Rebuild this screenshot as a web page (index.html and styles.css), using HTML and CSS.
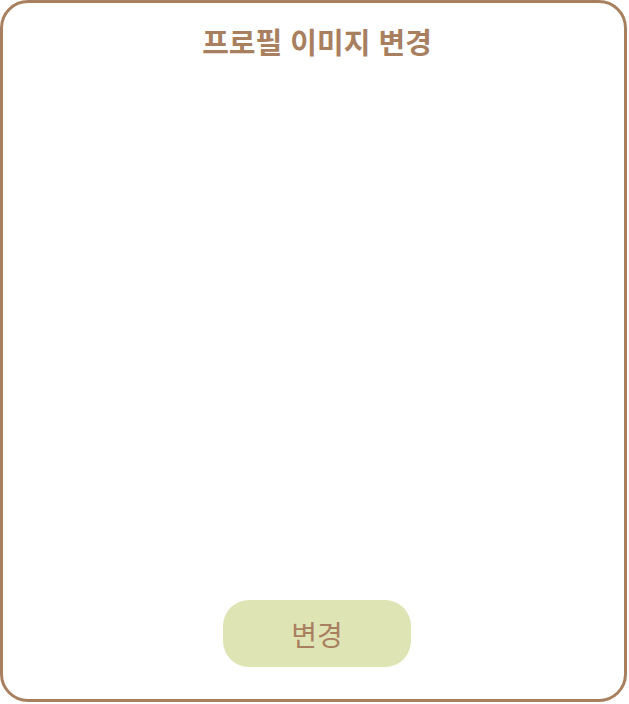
FILE: index.html
```html
<!DOCTYPE html>
<html lang="ko">
<head>
<meta charset="utf-8">
<link rel="stylesheet" href="styles.css">
</head>
<body>
<div class="modal">
  <h1 class="title">프로필 이미지 변경</h1>
  <div class="content"></div>
  <div class="actions">
    <button class="btn">변경</button>
  </div>
</div>
</body>
</html>
```
FILE: styles.css
```css
html, body {
  margin: 0;
  padding: 0;
  background: #ffffff;
}
.modal {
  box-sizing: border-box;
  width: 627px;
  height: 702px;
  border: 3px solid #a9805f;
  border-radius: 28px;
  background: #ffffff;
  display: flex;
  flex-direction: column;
  align-items: center;
  padding: 18px 0 32px 7px;
  font-family: "Noto Sans CJK KR", "Noto Sans", sans-serif;
}
.title {
  margin: 0;
  font-size: 29px;
  line-height: 40px;
  font-weight: 700;
  color: #a9805f;
}
.content {
  flex: 1;
}
.actions {
  display: flex;
  justify-content: center;
  margin-bottom: 0;
}
.btn {
  width: 188px;
  height: 67px;
  border: none;
  border-radius: 26px;
  background: #dfe4b5;
  color: #a9805f;
  font-family: "Noto Sans CJK KR", "Noto Sans", sans-serif;
  font-size: 28px;
  font-weight: 400;
  padding: 0;
}
```
